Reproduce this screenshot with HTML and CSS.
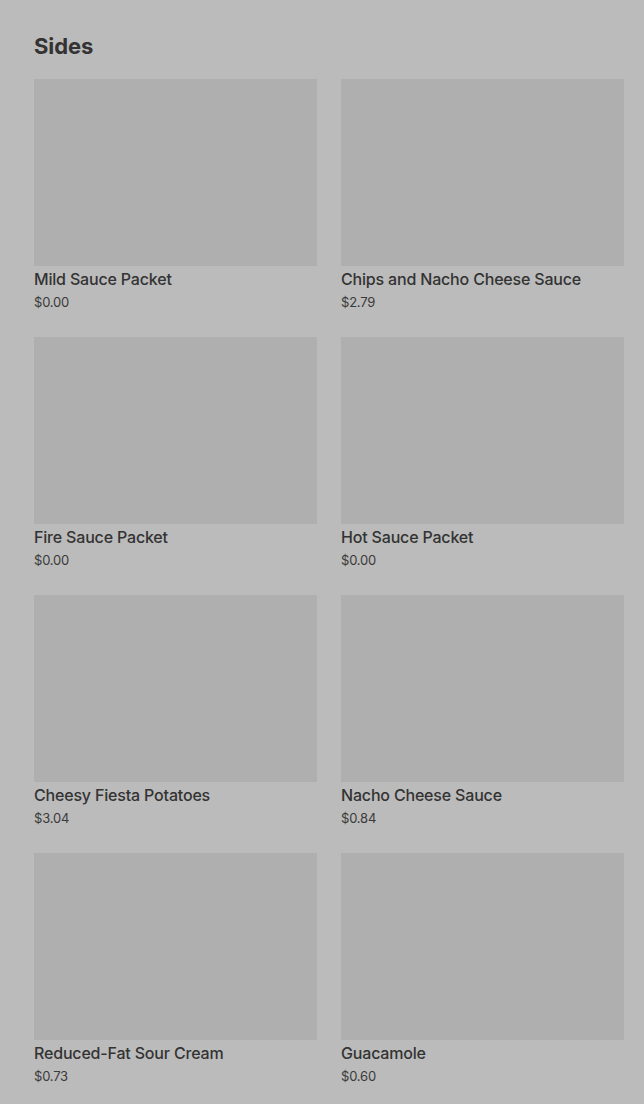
FILE: index.html
```html
<!DOCTYPE html>
<html>
<head>
    <title>Sides</title>
    <link rel="stylesheet" href="styles.css">
</head>
<body>
    <section class="menu-section">
        <h2 class="section-title">Sides</h2>
        <div class="item-grid">
            <div class="item">
                <div class="item-image"></div>
                <div class="item-name">Mild Sauce Packet</div>
                <div class="item-price">$0.00</div>
            </div>
            <div class="item">
                <div class="item-image"></div>
                <div class="item-name">Chips and Nacho Cheese Sauce</div>
                <div class="item-price">$2.79</div>
            </div>
            <div class="item">
                <div class="item-image"></div>
                <div class="item-name">Fire Sauce Packet</div>
                <div class="item-price">$0.00</div>
            </div>
            <div class="item">
                <div class="item-image"></div>
                <div class="item-name">Hot Sauce Packet</div>
                <div class="item-price">$0.00</div>
            </div>
            <div class="item">
                <div class="item-image"></div>
                <div class="item-name">Cheesy Fiesta Potatoes</div>
                <div class="item-price">$3.04</div>
            </div>
            <div class="item">
                <div class="item-image"></div>
                <div class="item-name">Nacho Cheese Sauce</div>
                <div class="item-price">$0.84</div>
            </div>
            <div class="item">
                <div class="item-image"></div>
                <div class="item-name">Reduced-Fat Sour Cream</div>
                <div class="item-price">$0.73</div>
            </div>
            <div class="item">
                <div class="item-image"></div>
                <div class="item-name">Guacamole</div>
                <div class="item-price">$0.60</div>
            </div>
        </div>
    </section>
</body>
</html>
```

FILE: styles.css
```css
body {
    margin: 0;
    background-color: #bbbbbb;
    font-family: Inter, "Liberation Sans", sans-serif;
    color: #333333;
}
.menu-section {
    padding: 32px 20px 0 34px;
}
.section-title {
    margin: 0;
    font-size: 22px;
    line-height: 28px;
    font-weight: 700;
    letter-spacing: -0.1px;
    color: #333333;
}
.item-grid {
    display: grid;
    grid-template-columns: 283px 283px;
    column-gap: 24px;
    row-gap: 26px;
    margin-top: 19px;
}
.item-image {
    height: 187px;
    background-color: #afafaf;
}
.item-name {
    margin-top: 3px;
    font-size: 16px;
    line-height: 20px;
    font-weight: 500;
    letter-spacing: -0.18px;
}
.item-price {
    margin-top: 4px;
    font-size: 13px;
    line-height: 18px;
    letter-spacing: -0.2px;
    color: #3a3a3a;
}
```
